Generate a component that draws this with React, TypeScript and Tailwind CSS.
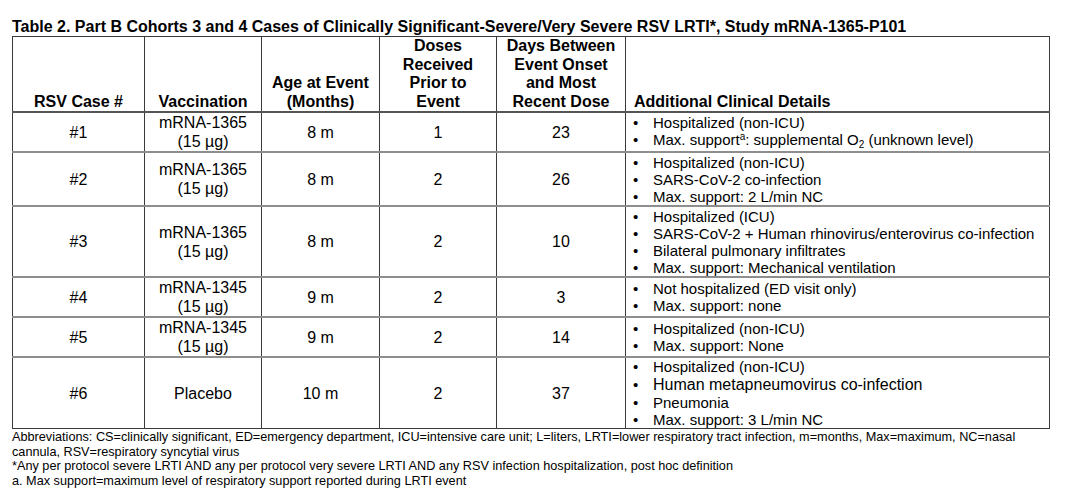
type Row = {
  id: string;
  vaccine: string[];
  age: string;
  doses: string;
  days: string;
  details: { text: React.ReactNode; big?: boolean }[];
  height: string;
};

const rows: Row[] = [
  {
    id: "#1",
    vaccine: ["mRNA-1365", "(15 µg)"],
    age: "8 m",
    doses: "1",
    days: "23",
    height: "h-[37px]",
    details: [
      { text: "Hospitalized (non-ICU)" },
      {
        text: (
          <>
            Max. support
            <span className="relative -top-[5px] text-[10px]">a</span>: supplemental O
            <span className="relative top-[3px] text-[10px]">2</span> (unknown level)
          </>
        ),
      },
    ],
  },
  {
    id: "#2",
    vaccine: ["mRNA-1365", "(15 µg)"],
    age: "8 m",
    doses: "2",
    days: "26",
    height: "h-[54px]",
    details: [
      { text: "Hospitalized (non-ICU)" },
      { text: "SARS-CoV-2 co-infection" },
      { text: "Max. support: 2 L/min NC" },
    ],
  },
  {
    id: "#3",
    vaccine: ["mRNA-1365", "(15 µg)"],
    age: "8 m",
    doses: "2",
    days: "10",
    height: "h-[71px]",
    details: [
      { text: "Hospitalized (ICU)" },
      { text: "SARS-CoV-2 + Human rhinovirus/enterovirus co-infection" },
      { text: "Bilateral pulmonary infiltrates" },
      { text: "Max. support: Mechanical ventilation" },
    ],
  },
  {
    id: "#4",
    vaccine: ["mRNA-1345", "(15 µg)"],
    age: "9 m",
    doses: "2",
    days: "3",
    height: "h-[37px]",
    details: [
      { text: "Not hospitalized (ED visit only)" },
      { text: "Max. support: none" },
    ],
  },
  {
    id: "#5",
    vaccine: ["mRNA-1345", "(15 µg)"],
    age: "9 m",
    doses: "2",
    days: "14",
    height: "h-[38px]",
    details: [
      { text: "Hospitalized (non-ICU)" },
      { text: "Max. support: None" },
    ],
  },
  {
    id: "#6",
    vaccine: ["Placebo"],
    age: "10 m",
    doses: "2",
    days: "37",
    height: "h-[71px]",
    details: [
      { text: "Hospitalized (non-ICU)" },
      { text: "Human metapneumovirus co-infection", big: true },
      { text: "Pneumonia" },
      { text: "Max. support: 3 L/min NC" },
    ],
  },
];

const th = "border-x border-[#3a3a3a] align-bottom text-center font-bold text-[16px] leading-[18.5px] p-0";
const td = "border-x border-[#3a3a3a] align-middle text-center text-[16px] leading-[19px] p-0";

export default function App() {
  return (
    <div className="min-h-[495px] w-[1078px] bg-white pl-[12px] pt-[18px] text-black font-['Liberation_Sans',Arial,sans-serif]">
      <h1 className="text-[16px] font-bold leading-[18px]">
        Table 2. Part B Cohorts 3 and 4 Cases of Clinically Significant-Severe/Very Severe RSV LRTI*, Study mRNA-1365-P101
      </h1>

      <table className="w-[1037px] table-fixed border-collapse border border-[#3a3a3a]">
        <colgroup>
          <col className="w-[132px]" />
          <col className="w-[117px]" />
          <col className="w-[118px]" />
          <col className="w-[117px]" />
          <col className="w-[129px]" />
          <col className="w-[424px]" />
        </colgroup>
        <thead>
          <tr className="h-[74px] border-b-2 border-[#555555]">
            <th className={th}>RSV Case #</th>
            <th className={th}>Vaccination</th>
            <th className={th}>
              Age at Event
              <br />
              (Months)
            </th>
            <th className={th}>
              Doses
              <br />
              Received
              <br />
              Prior to
              <br />
              Event
            </th>
            <th className={th}>
              Days Between
              <br />
              Event Onset
              <br />
              and Most
              <br />
              Recent Dose
            </th>
            <th className={`${th} text-left pl-[8px]`}>Additional Clinical Details</th>
          </tr>
        </thead>
        <tbody>
          {rows.map((r) => (
            <tr key={r.id} className={`${r.height} border-t-2 border-[#8e8e8e]`}>
              <td className={td}>{r.id}</td>
              <td className={`${td} leading-[18px]`}>
                {r.vaccine.map((v) => (
                  <div key={v}>{v}</div>
                ))}
              </td>
              <td className={td}>{r.age}</td>
              <td className={td}>{r.doses}</td>
              <td className={td}>{r.days}</td>
              <td className={`${td} text-left`}>
                <ul>
                  {r.details.map((d, i) => (
                    <li
                      key={i}
                      className={`flex ${d.big ? "text-[16px] leading-[19px]" : "text-[15px] leading-[17px]"}`}
                    >
                      <span className="w-[27px] shrink-0 pl-[7px] text-[15px]">•</span>
                      <span>{d.text}</span>
                    </li>
                  ))}
                </ul>
              </td>
            </tr>
          ))}
        </tbody>
      </table>

      <div className="pt-[1px] text-[12.7px] leading-[14.7px]">
        <p className="whitespace-nowrap">
          Abbreviations: CS=clinically significant, ED=emergency department, ICU=intensive care unit; L=liters, LRTI=lower respiratory tract infection, m=months, Max=maximum, NC=nasal
        </p>
        <p>cannula, RSV=respiratory syncytial virus</p>
        <p>*Any per protocol severe LRTI AND any per protocol very severe LRTI AND any RSV infection hospitalization, post hoc definition</p>
        <p>a. Max support=maximum level of respiratory support reported during LRTI event</p>
      </div>
    </div>
  );
}
